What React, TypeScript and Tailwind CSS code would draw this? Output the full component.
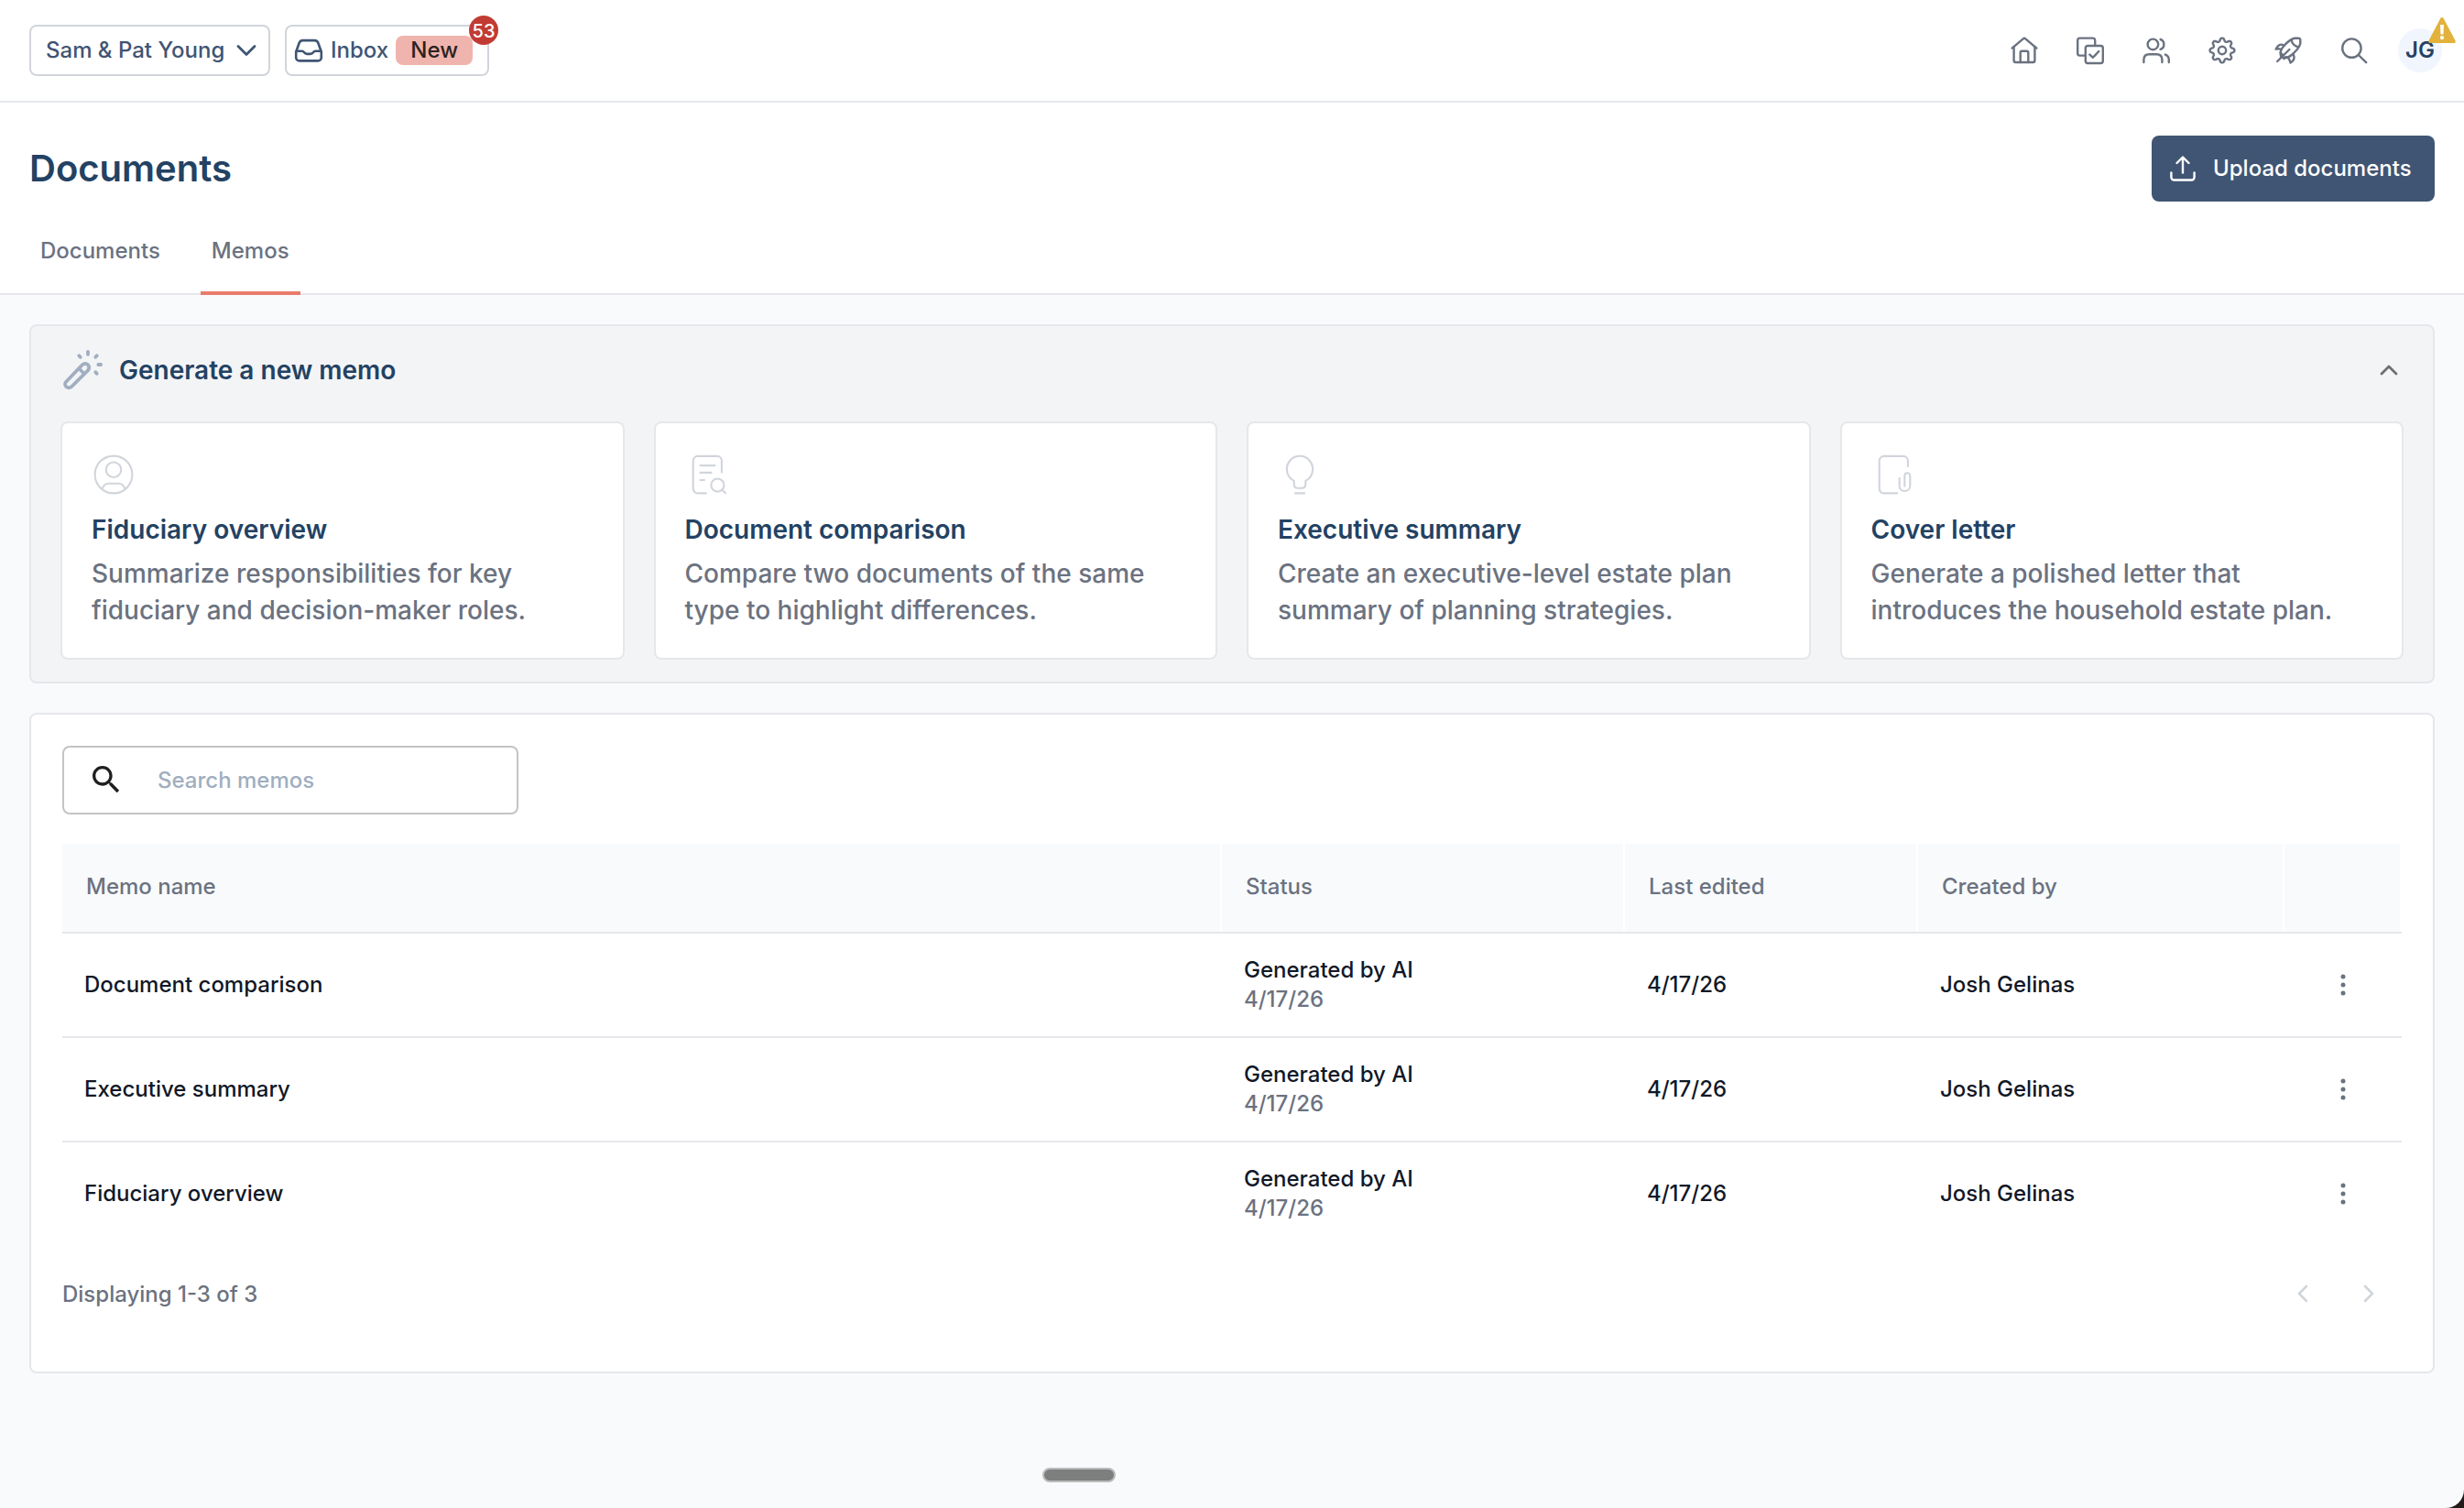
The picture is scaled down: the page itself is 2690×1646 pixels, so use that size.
import type { ReactNode } from "react";

type IconProps = { children: ReactNode; size: string; width?: number };

function Icon({ children, size, width = 2.4 }: IconProps) {
  return (
    <svg viewBox="0 0 32 32" className={size} fill="none" stroke="currentColor" strokeWidth={width} strokeLinecap="round" strokeLinejoin="round">
      {children}
    </svg>
  );
}

const gearPath = (() => {
  const steps = 160;
  let d = "";
  for (let i = 0; i < steps; i++) {
    const t = (i / steps) * Math.PI * 2;
    const wave = Math.cos(8 * t);
    const r = 11.7 + 1.7 * Math.sign(wave) * Math.pow(Math.abs(wave), 0.6);
    d += `${i ? "L" : "M"}${(16 + r * Math.sin(t)).toFixed(2)} ${(16 - r * Math.cos(t)).toFixed(2)}`;
  }
  return d + "Z";
})();

const navIcons: ReactNode[] = [
  <>
    <path d="M2.6 13.6 14.7 3.4a2 2 0 0 1 2.6 0L29.4 13.6" />
    <path d="M4.6 12v15a2 2 0 0 0 2 2h18.8a2 2 0 0 0 2-2V12" />
    <path d="M11.7 29V18.3a1.6 1.6 0 0 1 1.6-1.6h5.4a1.6 1.6 0 0 1 1.6 1.6V29" />
  </>,
  <>
    <path d="M10.5 21.6H4.6a2.4 2.4 0 0 1-2.4-2.4V5a2.4 2.4 0 0 1 2.4-2.4h14.2A2.4 2.4 0 0 1 21.2 5v5.5" />
    <rect x="10.8" y="11" width="19" height="19" rx="2.4" />
    <path d="m15.4 20.6 3.5 3.2 6.4-6.8" />
  </>,
  <>
    <circle cx="12.4" cy="9.4" r="5.8" />
    <path d="M2.4 29v-2.8c0-3.8 2.4-6 6-6h8c3.6 0 6 2.2 6 6V29" />
    <path d="M20.6 4c2.4.8 3.8 2.9 3.8 5.400s-1.400 4.600-3.800 5.400" />
    <path d="M25.900 20.600c2.500.9 3.900 2.900 3.900 5.600V29" />
  </>,
  <>
    <path d={gearPath} />
    <circle cx="16" cy="16" r="4.2" />
  </>,
  <>
    <path d="M23 2.800c-4.500.8-8 4-12.400 9.200C7.500 15.600 7 19 8.200 23.400c4.600 1.400 8 .8 11.600-2.400C25 16.700 28.500 12 29.300 8.600V4.600a2 2 0 0 0-2-2Z" />
    <path d="M19.600 5c.8 3.400 3 6 6.800 7.200" />
    <path d="M11.200 10.600C8 8.600 4.600 9.800 2.600 14.600c2-.6 3.600-.6 5.200.2" />
    <path d="M21.800 20.400c1.600 3.400.4 6.800-3.200 9.200-.4-2-1.200-3.800-2.600-5.600" />
    <path d="M17.400 15 4.200 28M7.600 18.400l3.200 3.200M11.400 25.200l2-2" />
  </>,
  <>
    <circle cx="13.4" cy="13.6" r="10.2" />
    <path d="m20.800 21 8.400 8.200" />
  </>,
];

function UserIcon() {
  return (
    <Icon size="size-12" width={1.4}>
      <circle cx="16" cy="16" r="13.6" />
      <circle cx="16" cy="12.5" r="5.500" />
      <path d="M7.700 26.600c.8-2.800 2.500-4.100 4.900-4.100h6.800c2.400 0 4.100 1.300 4.900 4.100" />
    </Icon>
  );
}

function DocSearchIcon() {
  return (
    <Icon size="size-12" width={1.4}>
      <path d="M15.2 29.6H9.2a3.4 3.4 0 0 1-3.4-3.4V6a3.4 3.4 0 0 1 3.4-3.4h14A3.4 3.4 0 0 1 26.6 6v8.4" />
      <path d="M11 9.4h10.6M11 14.6h8M11 20h3" />
      <circle cx="23.6" cy="23.7" r="4.7" />
      <path d="m27 27.2 2.3 2.3" />
    </Icon>
  );
}

function BulbIcon() {
  return (
    <Icon size="size-12" width={1.4}>
      <path d="M20.200 20.600c3.200-1.600 5.200-4.800 5.200-8.600A9.300 9.300 0 0 0 16 2.500 9.300 9.300 0 0 0 6.600 12c0 3.800 2 7 5.200 8.600v2.400c0 1.800 1 2.800 2.600 2.800h3.200c1.600 0 2.600-1 2.600-2.800Z" />
      <path d="M12.600 29.600h6.800" />
    </Icon>
  );
}

function DocClipIcon() {
  return (
    <Icon size="size-12" width={1.4}>
      <path d="M18.800 29.600H9.200a3.400 3.400 0 0 1-3.400-3.400V6a3.400 3.400 0 0 1 3.400-3.400h14A3.400 3.400 0 0 1 26.600 6v4" />
      <path d="M20.400 18.600v5.200c0 2.600 1.600 4.200 3.800 4.200s4-1.600 4-4.200v-6.800c0-1.300-.8-2.200-2-2.200s-2 .9-2 2.200v7.400" />
    </Icon>
  );
}

const cards = [
  { icon: <UserIcon />, title: "Fiduciary overview", lines: ["Summarize responsibilities for key", "fiduciary and decision-maker roles."] },
  { icon: <DocSearchIcon />, title: "Document comparison", lines: ["Compare two documents of the same", "type to highlight differences."] },
  { icon: <BulbIcon />, title: "Executive summary", lines: ["Create an executive-level estate plan", "summary of planning strategies."] },
  { icon: <DocClipIcon />, title: "Cover letter", lines: ["Generate a polished letter that", "introduces the household estate plan."] },
];

const rows = ["Document comparison", "Executive summary", "Fiduciary overview"];
const headings = ["Memo name", "Status", "Last edited", "Created by", ""];
const columns = "grid grid-cols-[1266px_440px_320px_400px_128px]";

function Header() {
  return (
    <header className="flex h-28 items-start justify-between border-b-2 border-[#e5e7eb] bg-white pl-8 pr-6 pt-[27px]">
      <div className="flex gap-4 font-medium text-[#3f5573]">
        <button className="flex h-14 w-[263px] items-center justify-between rounded-lg border-2 border-[#d1d5db] pl-4 pr-[13px]">
          <span>Sam &amp; Pat Young</span>
          <svg viewBox="0 0 22 14" className="h-3.5 w-[22px]" fill="none" stroke="currentColor" strokeWidth="2.800" strokeLinecap="round" strokeLinejoin="round">
            <path d="m2 2.500 9 9 9-9" />
          </svg>
        </button>
        <button className="relative flex h-14 w-[223px] items-center rounded-lg border-2 border-[#d1d5db] pl-2">
          <svg viewBox="0 0 32 28" className="mr-2 h-7 w-8" fill="none" stroke="currentColor" strokeWidth="2.600" strokeLinejoin="round">
            <path d="M2.200 15.500v6.300a3.600 3.600 0 0 0 3.600 3.600h20.400a3.600 3.600 0 0 0 3.600-3.600v-6.300L26.300 5.700a4 4 0 0 0-3.700-2.600H9.400a4 4 0 0 0-3.700 2.600Z" />
            <path d="M2.200 14.800h6.400c1.400 0 1.900.6 2.500 1.500.7 1 1.500 1.600 3 1.600h3.800c1.500 0 2.300-.6 3-1.600.6-.9 1.100-1.500 2.500-1.500h6.400" />
          </svg>
          <span>Inbox</span>
          <span className="ml-2 flex h-8 w-[84px] items-center justify-center rounded-lg bg-[#f0b4ae] text-[#2b2320]">New</span>
          <span className="absolute -right-3 -top-3 flex size-8 items-center justify-center rounded-full bg-[#c13b33] pt-px text-xl leading-none text-white">53</span>
        </button>
      </div>
      <div className="flex h-14 items-center text-[#6b7280]">
        <nav className="flex gap-10 pr-8">
          {navIcons.map((icon, i) => (
            <Icon key={i} size="size-8">{icon}</Icon>
          ))}
        </nav>
        <div className="relative flex size-12 items-center justify-center rounded-full bg-[#f1f6fe] font-semibold text-[#234263]">
          JG
          <svg viewBox="0 0 30 28" className="absolute -right-[15px] -top-3 h-7 w-[30px]">
            <path d="M13.200 1.200a2 2 0 0 1 3.600 0L29.600 25.400A1.800 1.800 0 0 1 28 28H2A1.800 1.800 0 0 1 .4 25.400Z" fill="#e2b23c" />
            <path d="M13 8h4l-.5 10.500h-3Z" fill="#fff" />
            <rect x="13.100" y="20.300" width="3.800" height="3.600" rx="1" fill="#fff" />
          </svg>
        </div>
      </div>
    </header>
  );
}

function TitleBar() {
  return (
    <section className="h-[210px] border-b-2 border-[#e5e7eb] bg-white">
      <div className="flex justify-between px-8 pt-9">
        <h1 className="text-[40px] font-semibold leading-[72px] text-[#234263]">Documents</h1>
        <button className="flex h-[72px] w-[309px] items-center rounded-lg bg-[#405573] pl-[19px] font-medium text-white">
          <svg viewBox="0 0 30 30" className="mr-[18px] size-[30px]" fill="none" stroke="currentColor" strokeWidth="2.400" strokeLinecap="round" strokeLinejoin="round">
            <path d="M15 19.500V3M8.500 9 15 2.500 21.500 9M2.400 19.500v5a3 3 0 0 0 3 3h19.200a3 3 0 0 0 3-3v-5" />
          </svg>
          Upload documents
        </button>
      </div>
      <div className="flex gap-8 pl-8 pt-8 font-medium text-[#6b7280]">
        <span className="h-[70px] px-3 leading-[43px]">Documents</span>
        <span className="h-[70px] border-b-4 border-[#e97b6d] px-3 leading-[43px]">Memos</span>
      </div>
    </section>
  );
}

function Generate() {
  return (
    <section className="rounded-lg border-2 border-[#e5e7eb] bg-[#f3f4f6] px-8 pb-6">
      <div className="flex h-[104px] items-center justify-between pl-[2px] pr-[5px]">
        <div className="flex items-center gap-4 pb-2">
          <svg viewBox="0 0 46 46" className="size-[46px] text-[#a0aec0]" fill="none" stroke="currentColor" strokeWidth="3.800" strokeLinecap="round" strokeLinejoin="round">
            <path d="M4.100 35.700 21.800 17.200a4.300 4.300 0 0 1 6.100 0 4.300 4.300 0 0 1 0 6.100L10.200 41a4.300 4.300 0 0 1-6.100 0 3.900 3.900 0 0 1 0-5.300Z" />
            <path d="m18.500 21.500 5 5M28 2.800v3M18.300 7.200l1.400 1.600M37.700 7.200l-1.400 1.600M39.300 17h2.800M36.300 25.200l1.400 1.600" />
          </svg>
          <h2 className="text-[28px] font-semibold text-[#234263]">Generate a new memo</h2>
        </div>
        <svg viewBox="0 0 22 14" className="mb-2 h-3.5 w-[22px] text-[#6f6f6f]" fill="none" stroke="currentColor" strokeWidth="2.800" strokeLinecap="round" strokeLinejoin="round">
          <path d="m3 11 8-8 8 8" />
        </svg>
      </div>
      <div className="grid grid-cols-4 gap-8">
        {cards.map((card) => (
          <article key={card.title} className="h-[260px] rounded-lg border-2 border-[#e5e7eb] bg-white p-8 text-[28px] leading-10">
            <div className="mb-4 text-[#d1d5db]">{card.icon}</div>
            <h3 className="mb-2 font-semibold text-[#234263]">{card.title}</h3>
            {card.lines.map((line) => (
              <p key={line} className="whitespace-nowrap font-[450] text-[#6b7280]">{line}</p>
            ))}
          </article>
        ))}
      </div>
    </section>
  );
}

function Memos() {
  return (
    <section className="h-[721px] rounded-lg border-2 border-[#e5e7eb] bg-white px-[34px] pt-[34px]">
      <div className="flex h-[75px] w-[498px] items-center rounded-lg border-2 border-[#c4c4c4] pl-[26px]">
        <svg viewBox="0 0 24 24" className="mb-px size-10 text-[#1f1f1f]" fill="currentColor">
          <path d="M15.500 14h-.79l-.28-.27C15.410 12.590 16 11.110 16 9.500 16 5.910 13.090 3 9.500 3S3 5.910 3 9.500 5.910 16 9.500 16c1.610 0 3.090-.59 4.230-1.570l.27.28v.79l5 4.990L20.490 19l-4.990-5zm-6 0C7.010 14 5 11.990 5 9.500S7.010 5 9.500 5 14 7.010 14 9.500 11.990 14 9.500 14z" />
        </svg>
        <span className="pl-9 font-[450] text-[#a0aec0]">Search memos</span>
      </div>
      <div className={`${columns} mt-8 h-[98px] border-b-2 border-[#e5e7eb] font-medium text-[#6b7280]`}>
        {headings.map((heading, i) => (
          <div key={i} className="flex items-center border-r-2 border-white bg-[#f9fafc] pb-0.5 pl-[26px]">{heading}</div>
        ))}
      </div>
      {rows.map((name) => (
        <div key={name} className={`${columns} h-[114px] items-center border-b-2 border-[#e5e7eb] font-medium text-[#111827] last-of-type:border-transparent`}>
          <span className="pl-6">{name}</span>
          <span className="pl-6">
            Generated by AI
            <span className="block font-[450] text-[#6b7280]">4/17/26</span>
          </span>
          <span className="pl-6">4/17/26</span>
          <span className="pl-6">Josh Gelinas</span>
          <svg viewBox="0 0 8 28" className="ml-[60px] h-7 w-2 text-[#6b7280]" fill="currentColor">
            <circle cx="4" cy="5" r="2.500" />
            <circle cx="4" cy="14" r="2.500" />
            <circle cx="4" cy="23" r="2.500" />
          </svg>
        </div>
      ))}
      <footer className="flex items-center justify-between pr-[29px] pt-9 text-[#6b7280]">
        <span className="font-[450]">Displaying 1-3 of 3</span>
        <div className="mb-[3px] flex gap-[58px] text-[#d1d5db]">
          <svg viewBox="0 0 14 22" className="h-[22px] w-3.5" fill="none" stroke="currentColor" strokeWidth="2.600" strokeLinecap="round" strokeLinejoin="round">
            <path d="m11 3-8 8 8 8" />
          </svg>
          <svg viewBox="0 0 14 22" className="h-[22px] w-3.5" fill="none" stroke="currentColor" strokeWidth="2.600" strokeLinecap="round" strokeLinejoin="round">
            <path d="m3 3 8 8-8 8" />
          </svg>
        </div>
      </footer>
    </section>
  );
}

export default function App() {
  return (
    <div className="h-[1646px] w-[2690px] overflow-hidden bg-[#231a1a] font-['Inter',sans-serif] text-2xl leading-8">
      <div className="relative h-full overflow-hidden rounded-br-[20px] bg-[#f9fafc]">
        <Header />
        <TitleBar />
        <main className="flex flex-col gap-8 px-8 pt-8">
          <Generate />
          <Memos />
        </main>
        <div className="absolute bottom-7 left-[1138px] h-4 w-20 rounded-full border-2 border-[#babcbb] bg-[#7d7f7e]" />
      </div>
    </div>
  );
}
